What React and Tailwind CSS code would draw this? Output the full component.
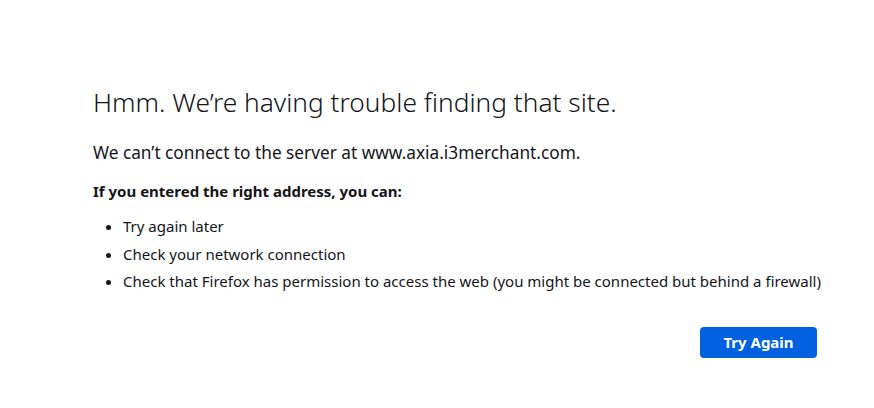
export default function App() {
  return (
    <div className="w-[874px] h-[408px] bg-white text-[#15141a] overflow-hidden" style={{ fontFamily: '"Noto Sans", sans-serif' }}>
      <div className="pl-[93px] pt-[84px] w-[830px]">
        <h1 className="text-[26.3px] font-light leading-[36px] m-0">Hmm. We’re having trouble finding that site.</h1>
        <p className="mt-[21px] text-[17.25px] leading-[24px]">We can’t connect to the server at www.axia.i3merchant.com.</p>
        <p className="mt-[16px] text-[15px] font-bold leading-[20px]">If you entered the right address, you can:</p>
        <ul className="mt-[15px] pl-[30px] list-disc text-[15px] leading-[20px] flex flex-col gap-[7.5px]">
          <li>Try again later</li>
          <li>Check your network connection</li>
          <li>Check that Firefox has permission to access the web (you might be connected but behind a firewall)</li>
        </ul>
        <div className="flex justify-end w-[724px] mt-[36px]">
          <button className="w-[117px] h-[31px] rounded-[4px] bg-[#0061e0] text-white font-bold text-[15px]">Try Again</button>
        </div>
      </div>
    </div>
  );
}
